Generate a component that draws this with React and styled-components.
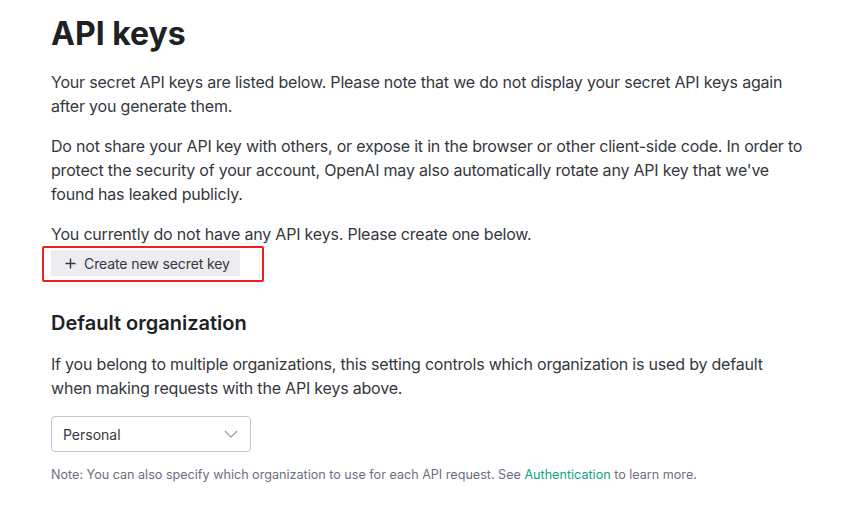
import React from 'react';
import styled, { createGlobalStyle } from 'styled-components';

var GlobalStyle = createGlobalStyle`
  body {
    margin: 0;
    background: #ffffff;
    font-family: Inter, "Noto Sans", sans-serif;
    color: #353740;
  }
`;

var Page = styled.div`
  padding: 14px 0 0 51px;
  width: 752px;
`;

var Title = styled.h1`
  margin: 0 0 16px;
  font-size: 32px;
  line-height: 40px;
  font-weight: 700;
  color: #202123;
`;

var Text = styled.p`
  margin: 0 0 16px;
  font-size: 16px;
  line-height: 24px;
  letter-spacing: -0.2px;
  color: #353740;
`;

var TightText = styled(Text)`
  margin-bottom: 0;
`;

var Highlight = styled.div`
  display: inline-flex;
  margin-left: -9px;
  padding: 2px 22px 4px 7px;
  border: 2px solid #f21c1c;
  border-radius: 2px;
`;

var CreateButton = styled.button`
  display: flex;
  align-items: center;
  gap: 8px;
  height: 26px;
  padding: 0 10px 0 14px;
  border: none;
  border-radius: 0;
  background: #ececf1;
  color: #353740;
  font-family: inherit;
  font-size: 14px;
  letter-spacing: -0.1px;
  cursor: pointer;
`;

var Subtitle = styled.h2`
  margin: 27px 0 15px;
  font-size: 20px;
  line-height: 28px;
  font-weight: 600;
  color: #202123;
`;

var Select = styled.div`
  display: flex;
  align-items: center;
  justify-content: space-between;
  box-sizing: border-box;
  width: 200px;
  height: 36px;
  margin-top: 15px;
  padding: 0 12px 0 11px;
  border: 1px solid #c5c5d2;
  border-radius: 4px;
  font-size: 14px;
  color: #353740;
`;

var Note = styled.div`
  margin-top: 14px;
  font-size: 12.6px;
  line-height: 18px;
  color: #6e6e80;
`;

var Link = styled.a`
  color: #10a37f;
  text-decoration: none;
`;

var PlusIcon = () => (
  <svg width="11" height="11" viewBox="0 0 11 11" fill="none" stroke="#353740" strokeWidth="1.4">
    <path d="M5.5 0.5v10M0.5 5.5h10" />
  </svg>
);

var ChevronIcon = () => (
  <svg width="14" height="8" viewBox="0 0 14 8" fill="none" stroke="#9a9aa6" strokeWidth="1.1">
    <path d="M1 1l6 6 6-6" />
  </svg>
);

export default function App() {
  return (
    <Page>
      <GlobalStyle />
      <Title>API keys</Title>
      <Text>
        Your secret API keys are listed below. Please note that we do not display your secret API keys again after you generate them.
      </Text>
      <Text>
        Do not share your API key with others, or expose it in the browser or other client-side code. In order to protect the security of your account, OpenAI may also automatically rotate any API key that we've<br />
        found has leaked publicly.
      </Text>
      <TightText>You currently do not have any API keys. Please create one below.</TightText>
      <Highlight>
        <CreateButton>
          <PlusIcon />
          Create new secret key
        </CreateButton>
      </Highlight>
      <Subtitle>Default organization</Subtitle>
      <Text>
        If you belong to multiple organizations, this setting controls which organization is used by default when making requests with the API keys above.
      </Text>
      <Select>
        <span>Personal</span>
        <ChevronIcon />
      </Select>
      <Note>
        Note: You can also specify which organization to use for each API request. See <Link href="#">Authentication</Link> to learn more.
      </Note>
    </Page>
  );
}
